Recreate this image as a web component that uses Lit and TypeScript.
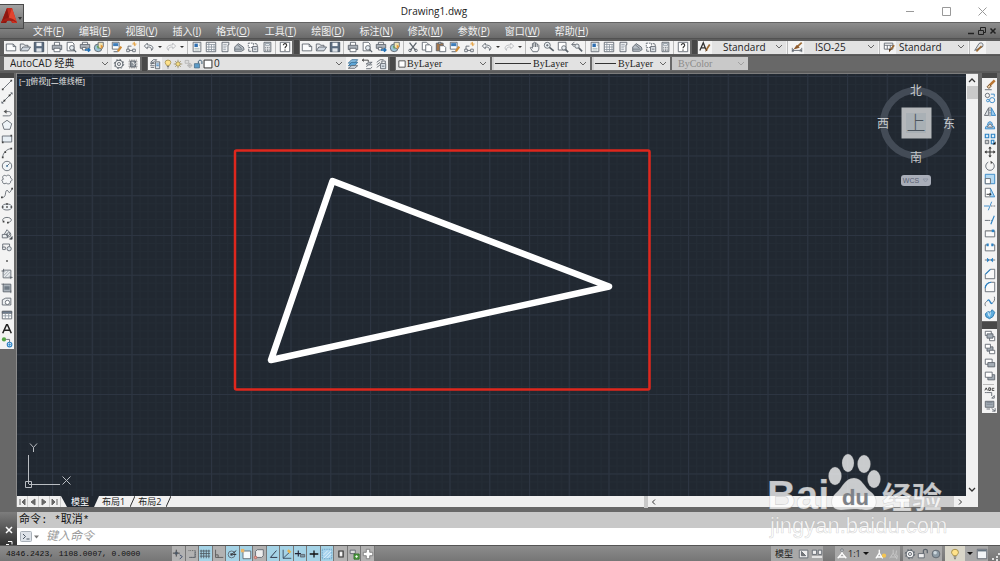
import { LitElement, html, svg, css } from "lit";
import { customElement } from "lit/decorators.js";
import { classMap } from "lit/directives/class-map.js";

const glyphs: Record<string, unknown> = {
  new: svg`<path d="M1.500 3.500h8l3 3v5h-11z" fill="#fbfcfd"/><path d="M9.500 3.500v3h3"/>`,
  open: svg`<path d="M1.500 11V3.500h4l1 1.500h4v2" fill="#e9ebee"/><path d="M1.500 11.500l3-4.500h9l-3 4.500z" fill="#cfd6de"/>`,
  save: svg`<path d="M1.500 1.500h11v11h-11z" fill="#5b6c80" stroke="#3d4a59"/><path d="M4 2h6v4H4z" fill="#f2f5f8" stroke="none"/><path d="M4 8.500h6v4H4z" fill="#dfe4e9" stroke="none"/>`,
  print: svg`<path d="M4 5V1.500h6V5" fill="#fff"/><path d="M1.500 5h11v5h-11z" fill="#aab0b7"/><path d="M3.500 8.500h7v4h-7z" fill="#fff"/>`,
  preview: svg`<path d="M2.500 1.500h6l2 2v8h-8z" fill="#fff"/><circle cx="8" cy="8" r="2.700" fill="#e7edf2"/><path d="M10 10l3 3" stroke-width="1.500"/>`,
  publish: svg`<path d="M4 4V1.500h6V4" fill="#fff"/><path d="M1.500 4h11v4.500h-11z" fill="#aab0b7"/><path d="M4 7.500h4v3H4z" fill="#fff"/><path d="M7 10.500h5M10.500 8.500l2 2-2 2" stroke="#1f6fb5" stroke-width="2"/>`,
  globe: svg`<circle cx="6" cy="8" r="4.500" fill="#9dc4d8"/><path d="M6 1.500h6v5l-2 3-4-2z" fill="#f3e6b4"/><path d="M4 5l3 2-1 3z" fill="#65a35a" stroke="none"/><path d="M9 4l3 2-3 4z" fill="#e69a3b" stroke="none"/>`,
  match: svg`<path d="M1.500 1.500h8v8h-8z" fill="#fff"/><path d="M2.500 2.500h6v3.500h-6z" fill="#3d7dbb" stroke="none"/><path d="M12 6.500L8 12" stroke="#d18b32" stroke-width="2.500"/><path d="M3 12.500h5" stroke="#4c535b"/>`,
  block: svg`<path d="M3.500 6v5h7M3.500 6h4"/><path d="M2 9.500h3v3H2zM9 9.500h3v3H9z" fill="#fff"/><path d="M11 1v5M8.500 3.500h5M9.200 1.700l3.600 3.600" stroke="#e5a140"/>`,
  undo: svg`<path d="M5 2.500L1.500 6 5 9V7c3.500-.3 5 .8 5 4 2-1.500 3.500-6-5-6.500z" fill="#f2f4f6"/>`,
  redo: svg`<g stroke="#b4b7ba"><path d="M9 2.500L12.500 6 9 9V7c-3.500-.3-5 .8-5 4-2-1.500-3.500-6 5-6.500z" fill="#f5f5f5"/></g>`,
  props: svg`<path d="M2.500 1.500h9v11h-9z" fill="#fff"/><path d="M4 3h4v4H4z" fill="#2f6fb0" stroke="none"/><path d="M4 8.500h6M4 10.500h6M9 3.500h1.500M9 5.500h1.500" stroke="#9aa"/>`,
  center: svg`<path d="M1.500 1.500h11v11h-11z" fill="#fff"/><path d="M1.500 4h11M4.500 1.500v11M1.500 7h11M1.500 10h11M7.500 4v8M10.500 4v8" stroke="#8a949f"/>`,
  palette: svg`<path d="M3.500 1.500h8v3h-1v8h-7z" fill="#eef0f2"/><path d="M5 4h4M5 6h4M5 8h3M5 10h3" stroke="#9aa3ac"/>`,
  sheet: svg`<path d="M2 7l4-4 6 4 1 3-3 2H2z" fill="#b9c0c7"/><path d="M2 9.500h9M5 4.500l5 4" stroke="#6b737b"/>`,
  markup: svg`<path d="M1.500 2.500h6v5h-6z" stroke-dasharray="2 1" fill="#fff"/><path d="M6.500 6.500h6v6h-6z" fill="#dfe4e8"/><path d="M9 3c3 0 3 1 3 3M2 9v3h3M8 9.500h3"/>`,
  calc: svg`<path d="M3.500 1.500h8v11h-8z" fill="#e6e8ea"/><path d="M5 3h5v2H5z" fill="#fff" stroke="#8a949f"/><path d="M5 7.500h5M5 9.500h5M5 11h5" stroke-dasharray="1 1"/>`,
  help: svg`<path d="M1.500 1.500h11v11h-11z" fill="#fff"/><path d="M5 5c0-2.500 4-2.500 4 0 0 1.500-2 1.500-2 3.500M7 10v1.500" stroke="#333" stroke-width="1.300"/>`,
  cut: svg`<path d="M3 2l7 9M11 2L4 11" stroke-width="1.500"/><circle cx="3.500" cy="11" r="1.500"/><circle cx="10.500" cy="11" r="1.500"/>`,
  copy: svg`<path d="M1.500 1.500h5l2 2v7h-7z" fill="#fff"/><path d="M5.500 4.500h5l2 2v6h-7z" fill="#fff"/>`,
  paste: svg`<path d="M1.500 2.500h8v9h-8z" fill="#a4754a"/><path d="M4 1.500h3v2H4z" fill="#ddd"/><path d="M5.500 5.500h5l2 2v5h-7z" fill="#fff"/>`,
  pan: svg`<path d="M4.500 12.500L1.500 8c0-1 1.500-1 2.500.5V3c1-1 1.700 0 1.700 0V1.800c1-.8 1.800 0 1.800 0V3c1-1 2 0 2 0v1.500c1-.8 2 0 2 1v4l-1.500 3z" fill="#f5f6f7"/><path d="M5.700 3v4M7.600 3v4M9.500 4v3"/>`,
  zoom: svg`<circle cx="5" cy="5" r="3.500" fill="#eef3f6"/><path d="M7.500 7.500l5 4" stroke-width="2"/><path d="M3.500 5h3M5 3.500v3"/>`,
  zoomwin: svg`<path d="M1.500 1.500h9v9h-9z" fill="#fff"/><circle cx="8" cy="8" r="2.500" fill="#e8edf1"/><path d="M10 10l3 3" stroke-width="2"/>`,
  zoomprev: svg`<path d="M4 1L1 4l3 3M1 4h4"/><circle cx="7" cy="6" r="2.500" fill="#e8edf1"/><path d="M9 8l4 4" stroke-width="2"/>`,
  textstyle: svg`<path d="M1 11L5 2l3 8M2.500 8h5" stroke="#333" stroke-width="1.500"/><path d="M12.500 4L8 11" stroke="#9c6b35" stroke-width="2"/><path d="M9 9l-2 3.500 3-1.500" fill="#6e4520" stroke="none"/>`,
  dimstyle: svg`<path d="M1.500 8v5M12.500 8v5M1.500 11h11M3.500 9.500L2 11l1.500 1.500M10.500 9.500L12 11l-1.500 1.500"/><path d="M12.500 2L8 6" stroke="#9c6b35" stroke-width="2"/><path d="M7 5l2.500 2.500L4 9z" fill="#8a5426" stroke="#8a5426"/>`,
  tablestyle: svg`<path d="M1.500 2.500h10v7h-10z" fill="#fff"/><path d="M1.500 5h10M5 5v4.500M8.500 5v4.500"/><path d="M13 5L9 10" stroke="#9c6b35" stroke-width="2"/><path d="M7 9l3 1-3 3z" fill="#5f3b1a" stroke="none"/>`,
  mlstyle: svg`<path d="M2 11L7 3c3-2 6 0 4 4z" fill="#e6e8ea"/><path d="M10 6L4 12" stroke="#9c6b35" stroke-width="2"/>`,
  gear: svg`<circle cx="7" cy="7" r="4.500" fill="#f2f2f2" stroke-width="1.200"/><circle cx="7" cy="7" r="5.500" stroke-dasharray="2 2.300"/><circle cx="7" cy="7" r="1.800"/>`,
  workspace: svg`<path d="M2.500 2.500h9v9h-9z" stroke-dasharray="1 1" stroke="#666"/><path d="M4 3.500h6v7H4z" fill="#8a9299"/><path d="M5.500 5h2v2M7 9l3-3" stroke="#eee"/>`,
  layers: svg`<path d="M2 5l3-3h4L6 5zM2 8l3-3M2 11h4" fill="#e8ebee"/><path d="M1.500 6.500h5M1.500 9h5"/><path d="M7.500 4.500h5v8h-5z" fill="#dce3e9"/><path d="M8.500 7h3M8.500 9h3" stroke="#3b7fbf"/>`,
  bulb: svg`<path d="M5 9c0-1.500-2-2-2-4a4 3.500 0 0 1 8 0c0 2-2 2.500-2 4z" fill="#ffe28a" stroke="#9b853f"/><path d="M5.500 10.500h3M6 12.500h2" stroke="#555"/>`,
  sun: svg`<path d="M7 1v12M1 7h12M3 3l8 8M11 3l-8 8" stroke="#92855a"/><circle cx="7" cy="7" r="3" fill="#f5dc82" stroke="#92855a"/>`,
  freeze: svg`<g stroke="#aaa"><path d="M3 2h5v4H3z" fill="#ddd"/><circle cx="9.500" cy="9" r="2.500"/><path d="M9.500 5.500v7M6 9h7"/></g>`,
  unlock: svg`<path d="M2 6.500h7v6H2z" fill="#5d9cc9" stroke="#3c6480"/><path d="M7.500 6V4c0-3 5-3 5 0v3" stroke="#3c5c74" stroke-width="1.400"/>`,
  swatch: svg`<path d="M1.500 1.500h11v11h-11z" fill="#fff" stroke="#333" stroke-width="1.400"/>`,
  layercur: svg`<path d="M1.500 6l4-4h7L9 6z" fill="#8fc3e6" stroke="#3a6f94"/><path d="M1.500 9l4-4h7L9 9z" fill="#5ca6d8" stroke="#3a6f94"/><path d="M1.500 12l4-3h7L9 12z" fill="#dbe3ea"/>`,
  layerprev: svg`<path d="M6 7l3-2h4l-3 2zM6 10l3-2h4M6 12.500h5l2-2" fill="#e8ebee"/><path d="M1.500 2.500h7v2M1.500 2.500l2-1.500M1.500 2.500l2 1.500" stroke="#333"/>`,
  layerstate: svg`<path d="M2 5l4-3h4M2 8l4-3M2 11l4-3"/><path d="M6.500 6.500h6v6h-6z" fill="#dce3e9"/><path d="M8 6V3.500h4V6M8 9.500h3"/>`,

  line: svg`<path d="M2 12L12 2"/><path d="M1 11h2v2H1zM11 1h2v2h-2z" fill="#444" stroke="none"/>`,
  xline: svg`<path d="M1 13L13 1"/><path d="M3 9h2v2H3zM9 3h2v2H9z" fill="#333" stroke="none"/><path d="M1 11v2h2M11 1h2v2"/>`,
  pline: svg`<path d="M2 11.500h7c4 0 4-5 0-5H5"/><path d="M6.500 4L3 6.500 6.500 9z" fill="#555" stroke="none"/>`,
  polygon: svg`<path d="M7 1.500l5.500 4-2 6.500h-7l-2-6.500z" fill="#eef3f7"/>`,
  rect: svg`<path d="M1.500 3.500h11v7h-11z" fill="#e7eef4"/><path d="M1 10h2v2H1zM11 2h2v2h-2z" fill="#444" stroke="none"/>`,
  arc: svg`<path d="M2 12C2 7 7 2 12 2"/><path d="M1 11h2v2H1zM4 5h2v2H4zM11 1h2v2h-2z" fill="#444" stroke="none"/>`,
  circle: svg`<circle cx="7" cy="7" r="5.500" fill="#f0f4f7"/><path d="M7 7l3-3"/><path d="M6 6h2v2H6z" fill="#3c6d96" stroke="none"/>`,
  cloud: svg`<path d="M3 6C0 3 4 0 6 2.500c2-2.500 6-.5 5 2 3 1 2 4 0 4 1 3-3 4-5 2-2 2-5 0-4-2C0 8 1 6 3 6z" fill="#f5f6f7"/>`,
  spline: svg`<path d="M1 12c6 1 3-8 6-8s1 7 6-2"/><path d="M0 11h2v2H0zM12 1h2v2h-2z" fill="#444" stroke="none"/>`,
  ellipse: svg`<ellipse cx="7" cy="7" rx="5.500" ry="3.500" fill="#eef2f5"/><path d="M6 6h2v2H6zM1 6h2v2H1zM11 6h2v2h-2zM6 2.500h2v2H6z" fill="#444" stroke="none"/>`,
  earc: svg`<path d="M3 9C0 6 4 4 7 4c6 0 7 5 1 6"/><path d="M7 9h2v2H7zM2 8h2v2H2z" fill="#444" stroke="none"/>`,
  insert: svg`<path d="M1.500 7.500h6v4h-6zM4 7l3-5 4 4-3 4" fill="#eceff1"/><circle cx="9" cy="8" r="2.500"/><path d="M13 10v3h-3z" fill="#222"/>`,
  mkblock: svg`<path d="M2 8.500V3.500h8v3M4 8.500H2" fill="none"/><circle cx="9.500" cy="9" r="2.500" fill="#dde3e8"/><path d="M2 7h3v3H2z" fill="#fff"/>`,
  point: svg`<path d="M6 6h2v2H6z" fill="#444" stroke="none"/>`,
  hatch: svg`<path d="M2.500 2.500h9v9h-9z" fill="#e8ebee"/><path d="M2.500 6l3.500-3.500M2.500 9.500l7-7M4 11.500L11.500 4M8 11.500l3.500-3.500" stroke="#9aa3ab"/><path d="M.5 3.500h3M3 1v3M10.500 11h3M11.500 10v3"/>`,
  gradient: svg`<path d="M2.500 2.500h9v9h-9z" fill="#a9b1b9"/><path d="M4 5h6v4H4z" fill="#6f7a85" stroke="none"/><path d="M.5 2.500h3M11.500 10v3"/>`,
  region: svg`<path d="M1.500 4.500l4-2h6v8h-10z" fill="#eceff1"/><circle cx="7.500" cy="7.500" r="2.500" fill="#fff"/>`,
  table: svg`<path d="M1.500 2.500h11v9h-11z" fill="#fff"/><path d="M1.500 3h11v2h-11z" fill="#74879a"/><path d="M1.500 8h11M5 5v6.500M9 5v6.500" stroke="#8c98a3"/>`,
  mtext: svg`<path d="M2 12L6.500 2h1L12 12M4 8.500h6" stroke="#222" stroke-width="1.800"/>`,
  addsel: svg`<circle cx="3.500" cy="4" r="2.500" fill="#55a545" stroke="none"/><path d="M6 4h4v3"/><circle cx="10" cy="10" r="2.700" fill="#e8f3fb" stroke="#2b82c4" stroke-width="1.300"/><path d="M8.500 10h3M10 8.500v3" stroke="#2b82c4"/>`,

  erase: svg`<path d="M12.500 1.500L6 8" stroke="#b97633" stroke-width="3"/><path d="M6.500 6.500l2 2-3 2.500-2-2z" fill="#e8c9a0" stroke="#6a4a2a"/><path d="M1 12.500h8"/>`,
  copyobj: svg`<circle cx="4" cy="4" r="2.500"/><circle cx="4.500" cy="10" r="1.500" stroke="#2b82c4"/><circle cx="9.500" cy="9.500" r="3" stroke="#2b82c4"/><path d="M8 2.500h4v3" stroke="#2b82c4"/>`,
  mirror: svg`<path d="M5.500 2v9h-5z" fill="#dfe3e6"/><path d="M8.500 2v9h5z" fill="#9ccbed" stroke="#2b82c4"/><path d="M7 1v12" stroke-dasharray="2 1"/>`,
  offset: svg`<path d="M1.500 11.500c0-4 3-3 3-6s5-3 5 0 3 2 3 6z" fill="#9ccbed" stroke="#2b82c4"/><path d="M4 9.500c0-2 2-1.500 2-3.500h2c0 2 2 1.500 2 3.500z" fill="#eee"/>`,
  array: svg`<path d="M1.500 8.500h4v4h-4z" fill="#ccc"/><path d="M1.500 1.500h4v4h-4zM8.500 1.500h4v4h-4zM8.500 8.500h3v4h-3z" stroke="#2b82c4" stroke-width="1.300" fill="#dceefa"/><path d="M13.500 10v3.500H10z" fill="#111" stroke="none"/>`,
  move: svg`<path d="M7 2v10M2 7h10" stroke="#333" stroke-width="1.200"/><path d="M7 .5L9 3H5zM7 13.500L9 11H5zM.5 7L3 5v4zM13.500 7L11 5v4z" fill="#333" stroke="none"/>`,
  rotate: svg`<path d="M5 2.500a5 5 0 1 0 4 0"/><path d="M7.500 1L10 2.500 8 5z" fill="#444" stroke="none"/>`,
  scale: svg`<path d="M1.500 1.500h11v11h-11z" fill="#b6daf2" stroke="#2b82c4"/><path d="M1.500 6.500h6v6h-6z" fill="#fff"/>`,
  stretch: svg`<path d="M1.500 1.500h6v10h-6z" fill="#fff"/><path d="M7.500 1.500l5 10h-5" fill="#a8d3f0" stroke="#2b82c4"/><path d="M3 8.500h5M6.500 7L8 8.500 6.500 10" stroke="#111"/>`,
  trim: svg`<path d="M8 7h6" stroke-dasharray="2 1"/><path d="M0 7h6" stroke="#2b82c4"/><path d="M9 2L5 12" stroke="#2b82c4"/>`,
  extend: svg`<path d="M1 7.500h4"/><path d="M5 7.500h4" stroke-dasharray="2 1"/><path d="M12 2L8 12" stroke="#2b82c4" stroke-width="1.300"/>`,
  breakpt: svg`<path d="M1.500 4.500h11v7h-11z" fill="#fafafa"/><path d="M1.500 4.500h8" stroke="#999"/><path d="M9 3h3v3H9z" fill="#2b82c4" stroke="none"/>`,
  brk: svg`<path d="M4 4.500H1.500v7h11v-7H10" fill="#fafafa"/><path d="M3 3h2.500v3H3zM8.500 3H11v3H8.500z" fill="#2b82c4" stroke="none"/>`,
  join: svg`<path d="M1 7h12"/><path d="M4 5L6 7 4 9zM10 5L8 7l2 2z" fill="#2b82c4" stroke="#2b82c4"/>`,
  chamfer: svg`<path d="M1.500 12.500v-5l6-6h5v11z" fill="#fafafa"/><path d="M1.500 7.500l6-6" stroke="#2b82c4" stroke-width="1.300"/>`,
  fillet: svg`<path d="M1.500 12.500v-4c0-4 3-7 7-7h4v11z" fill="#fafafa"/><path d="M1.500 8.500c0-4 3-7 7-7" stroke="#2b82c4" stroke-width="1.300"/>`,
  blend: svg`<path d="M2 13c-2-3 0-5 2-6M10 9c2-1 3-4 2-7"/><path d="M4 7c3-5 3 6 6 2" stroke="#2b82c4" stroke-width="1.500"/>`,
  explode: svg`<path d="M1.500 7l3-3 3 1 2-3 3 3-2 5-4 2.500-4-2z" fill="#5faee0" stroke="#2270a8"/><path d="M4.500 4l1 5M7.500 5l-1 5" stroke="#e8f4fc"/>`,
  front: svg`<path d="M1.500 1.500h7v5h-7zM6.500 7.500h6v5h-6z" fill="#fff"/><path d="M3.500 4.500h7v5h-7z" fill="#a3acb4"/>`,
  back: svg`<path d="M3.500 4.500h7v5h-7z" fill="#a3acb4"/><path d="M1.500 1.500h6v4.500h-6zM6.500 8.500h6v4h-6z" fill="#fff"/>`,
  above: svg`<path d="M1.500 2.500h8v6h-8z" fill="#fff"/><path d="M4.500 6.500h8v5h-8z" fill="#a3acb4"/>`,
  under: svg`<path d="M4.500 5.500h8v6h-8z" fill="#a3acb4"/><path d="M1.500 2.500h8v6h-8z" fill="#fff"/>`,
  textfront: svg`<path d="M1 4l1.500-3L4 4M5.500 1v3h2v-3zM12 1.500H9.500V4H12" stroke="#333"/><path d="M3 6.500h6v4M12 10v3H9z" /><path d="M1 6.500h2"/>`,
  hatchback: svg`<path d="M1.500 1.500h10v7h-10z" fill="#a3acb4"/><path d="M3 3h7M3 5h7" stroke="#7c8791"/><path d="M3 10.500h4M9 10l4 3M13 9.500v3.500H9.500"/>`,

  infer: svg`<path d="M5 2v8M1 6h8" stroke="#333"/><circle cx="5" cy="6" r="1.500" fill="#456"/><path d="M9 8l3 2-3 3" stroke="#346"/>`,
  snap: svg`<path d="M3 3h8v8H3" stroke-dasharray="1 1" stroke="#555"/><path d="M10.500 4v7H4"/>`,
  grid: svg`<path d="M2.500 2v10M5.500 2v10M8.500 2v10M11.500 2v10M1 3.500h12M1 6.500h12M1 9.500h12" stroke="#4f5961"/>`,
  ortho: svg`<path d="M3 2v9h9M3 8h3v3" stroke="#555"/>`,
  polar: svg`<circle cx="6.500" cy="7.500" r="4"/><path d="M6.500 7.500L12 3M6.500 7.500H12" stroke="#222"/><path d="M5.500 6.500h2v2h-2z" fill="#222"/>`,
  osnap: svg`<path d="M3.500 3.500h9v9h-9z" fill="#f5fafd"/><path d="M1 1h4v4H1z" fill="#e7b569" stroke="none"/>`,
  osnap3: svg`<path d="M3 4l2-2h7v7l-2 2H3z" fill="#eee"/><circle cx="3" cy="11" r="1.500" fill="#e9a591" stroke="#b66"/>`,
  otrack: svg`<path d="M11 3L4 11h8" stroke="#223"/>`,
  ducs: svg`<path d="M2.500 2v10H12M2.500 12L10 5" stroke="#345"/><path d="M9 1.500l3 3-2 2-3-3z" fill="#e7b24a" stroke="none"/>`,
  dyn: svg`<path d="M5 3v7M1 6.500h7" stroke="#223" stroke-width="1.300"/><path d="M7.500 7.500h5v3h-5z" fill="#7f98a5"/>`,
  lwt: svg`<path d="M7 3v8M2 7h10" stroke="#111" stroke-width="1.500"/>`,
  tpy: svg`<path d="M1.500 1.500h11v11h-11z" fill="#a7d3ee" stroke="#5b94b8" stroke-dasharray="1 1"/><path d="M3 12l9-9M3 8l5-5M7 12l5-5" stroke="#e6f4fb"/>`,
  quick: svg`<path d="M4.500 3.500h5v7h-5z" fill="#ccc" stroke="#333" stroke-width="1.300"/><path d="M6 5h2v4H6z" fill="#fff" stroke="none"/>`,
  cycle: svg`<path d="M2.500 2.500h6v4h-6z" fill="#ddd"/><path d="M7 7h6v6H7z" fill="#50a043" stroke="#2e6d25"/><path d="M8.500 10h3M10 8.500v3" stroke="#fff"/>`,
  plus: svg`<path d="M5 1.500h4V5h3.500v4H9v3.500H5V9H1.500V5H5z" fill="#fff" stroke="#777"/>`,
  layoutq: svg`<path d="M1.500 2.500h10v9h-10z" fill="#eee"/><path d="M4 4v5h5z" fill="#777"/>`,
  viewsq: svg`<path d="M1.500 2.500h5v5h-5zM8.500 2.500h4v5h-4z" fill="#eee"/><path d="M1 10.500h12" stroke-width="2" stroke="#eee"/>`,
  scaleA: svg`<path d="M7 2v4L2 12M7 6l5 6M3.500 10.500h7" stroke="#fff" stroke-width="1.500"/><circle cx="7" cy="2.500" r="1.500" fill="#eee"/>`,
  scaleSun: svg`<path d="M5 2v4L1 12M5 6l4 6M2.500 10.500h6" stroke="#fff" stroke-width="1.500"/><circle cx="10.500" cy="9" r="2.500" fill="#f4c552" stroke="none"/>`,
  scaleOff: svg`<g stroke="#ccc"><path d="M6 2v4L2 12M6 6l4 6M3.500 10.500h6M10 3l-1 5 2 1-1 4" /></g>`,
  hw: svg`<path d="M1.500 6.500h7v5h-7z" fill="#eee"/><path d="M7.500 6V3c0-2 4.500-2 4.500 0v3" stroke-width="1.500"/>`,
  isolate: svg`<circle cx="7" cy="7" r="4.500" fill="#8d9ba5"/><circle cx="6" cy="5.500" r="2" fill="#cdd7dd" stroke="none"/>`,
  clean: svg`<path d="M1.500 1.500h11v11h-11z" fill="#f2f4f6"/><path d="M2 2h10v2H2z" fill="#65737f" stroke="none"/>`,
};

const icon = (name: string) => html`<svg class="ic" viewBox="0 0 14 14" fill="none" stroke="#5c646c" aria-hidden="true">${glyphs[name]}</svg>`;
const chevron = html`<svg class="chev" viewBox="0 0 8 6" fill="none" stroke="#666" aria-hidden="true"><path d="M1 1l3 3 3-3"/></svg>`;

type Tool = [string, string];
const SEP: Tool = ["|", ""];
const DROP: Tool = ["v", "更多"];

const fileTools: Tool[] = [["new", "新建"], ["open", "打开"], ["save", "保存"], SEP, ["print", "打印"], ["preview", "打印预览"], ["publish", "发布"], ["globe", "三维打印"], SEP];
const undoTools: Tool[] = [["undo", "放弃"], DROP, ["redo", "重做"], DROP, SEP];
const paletteTools: Tool[] = [["props", "特性"], ["center", "设计中心"], ["palette", "工具选项板"], ["sheet", "图纸集"], ["markup", "标记集"], ["calc", "计算器"], SEP, ["help", "帮助"]];
const quickBar: Tool[] = [...fileTools, ["match", "特性匹配"], ["block", "块编辑器"], SEP, ...undoTools, ...paletteTools];
const standardBar: Tool[] = [
  ...fileTools, ["cut", "剪切"], ["copy", "复制"], ["paste", "粘贴"], ["match", "特性匹配"], ["block", "块编辑器"], SEP,
  ...undoTools, ["pan", "平移"], ["zoom", "实时缩放"], ["zoomwin", "窗口缩放"], ["zoomprev", "上一个缩放"], SEP, ...paletteTools,
];
const drawBar: Tool[] = [
  ["line", "直线"], ["xline", "构造线"], ["pline", "多段线"], ["polygon", "多边形"], ["rect", "矩形"], ["arc", "圆弧"], ["circle", "圆"],
  ["cloud", "修订云线"], ["spline", "样条曲线"], ["ellipse", "椭圆"], ["earc", "椭圆弧"], ["insert", "插入块"], ["mkblock", "创建块"], ["point", "点"],
  ["hatch", "图案填充"], ["gradient", "渐变色"], ["region", "面域"], ["table", "表格"], ["mtext", "多行文字"], ["addsel", "添加选定对象"],
];
const modifyBar: Tool[] = [
  ["erase", "删除"], ["copyobj", "复制"], ["mirror", "镜像"], ["offset", "偏移"], ["array", "阵列"], ["move", "移动"], ["rotate", "旋转"],
  ["scale", "缩放"], ["stretch", "拉伸"], ["trim", "修剪"], ["extend", "延伸"], ["breakpt", "打断于点"], ["brk", "打断"], ["join", "合并"],
  ["chamfer", "倒角"], ["fillet", "圆角"], ["blend", "光顺曲线"], ["explode", "分解"],
];
const orderBar: Tool[] = [["front", "前置"], ["back", "后置"], ["above", "置于对象之上"], ["under", "置于对象之下"], SEP, ["textfront", "文字前置"], ["hatchback", "图案填充后置"]];
const modes: [string, string, boolean][] = [
  ["infer", "推断约束", false], ["snap", "捕捉", false], ["grid", "栅格", true], ["ortho", "正交", false], ["polar", "极轴", true],
  ["osnap", "对象捕捉", true], ["osnap3", "三维对象捕捉", false], ["otrack", "对象追踪", true], ["ducs", "动态 UCS", true], ["dyn", "动态输入", true],
  ["lwt", "线宽", true], ["tpy", "透明度", true], ["quick", "快捷特性", false], ["cycle", "选择循环", false], ["plus", "注释监视器", false],
];
const menus: [string, string][] = [
  ["文件", "F"], ["编辑", "E"], ["视图", "V"], ["插入", "I"], ["格式", "O"], ["工具", "T"],
  ["绘图", "D"], ["标注", "N"], ["修改", "M"], ["参数", "P"], ["窗口", "W"], ["帮助", "H"],
];

@customElement("app-root")
export class AppRoot extends LitElement {
  static styles = css`
    :host { display: flex; flex-direction: column; min-height: 100vh; background: #686868; color: #222; font: 10px/14px "Open Sans", "Noto Sans CJK SC", sans-serif; }
    * { box-sizing: border-box; }
    button, select, input { font: inherit; color: inherit; margin: 0; padding: 0; border: 0; background: none; border-radius: 0; }
    button { display: grid; place-items: center; }
    select { appearance: none; }
    svg { display: block; }
    .title { display: grid; grid-template-columns: 1fr auto 1fr; align-items: center; height: 22px; background: #fff; }
    .title h1 { margin: 0; font: 10px/16px "Open Sans", sans-serif; grid-column: 2; padding-right: 132px; }
    .win { display: flex; justify-content: flex-end; }
    .win button { width: 36px; height: 20px; }
    .app { position: absolute; left: 0; top: 4px; width: 24px; height: 25px; background: linear-gradient(#a2a2a2, #6f6f6f); border: 1px solid #4a4a4a; border-left: 0; z-index: 1; }
    .menu { display: flex; align-items: center; gap: 15px; height: 16px; padding-left: 33px; background: linear-gradient(#8d8d8d, #6a6a6a); border-top: 1px solid #636363; color: #f1f1f1; }
    .menu button { white-space: nowrap; display: block; line-height: 14px; }
    .menu .mdi { margin-left: auto; display: flex; gap: 3px; padding-right: 3px; }
    .mdi button { width: 8px; height: 10px; }
    .bars { display: flex; align-items: center; background: #5d5d5d; }
    .first { height: 17px; padding-left: 4px; border-top: 1px solid #525252; }
    .second { height: 18px; padding-left: 4px; background: #686868; border-top: 1px solid #555; border-bottom: 2px solid #5c5c5c; }
    .panel { display: flex; height: 13px; background: #f3f3f3; flex: none; }
    .panel.fill { flex: 1; }
    .panel button { width: 14px; height: 13px; }
    .panel .drop { width: 8px; }
    .panel .drop::after { content: ""; border: 2px solid transparent; border-top-color: #333; margin-top: 2px; }
    .ic { width: 12px; height: 12px; }
    .sep { width: 4px; flex: none; background: linear-gradient(90deg, transparent 1px, #bbb 1px 2px, transparent 2px); }
    .grip { width: 8px; height: 14px; flex: none; background: #484848; border-left: 2px solid #686868; border-right: 1px solid #686868; }
    .pick { display: grid; align-items: center; flex: none; height: 13px; background: #e2e2e2; }
    .pick > * { grid-area: 1 / 1; }
    .pick select { width: 100%; height: 13px; line-height: 13px; padding-left: 6px; color: #222; opacity: 1; }
    .pick.ml { flex: 1; }
    .chev { width: 8px; height: 6px; justify-self: end; margin-right: 3px; pointer-events: none; }
    .lead { display: flex; padding-left: 1px; pointer-events: none; }
    .lead .ic { width: 10px; height: 10px; }
    .serif select { font-family: "Liberation Serif", serif; }
    .std { width: 74px; } .std select { padding-left: 11px; }
    .narrow { width: 72px; } .narrow select { padding-left: 3px; }
    .ws { width: 108px; }
    .layer { width: 184px; } .layer select { padding-left: 52px; }
    .color { width: 94px; margin-right: 2px; } .color select { padding-left: 11px; }
    .color .ic { width: 8px; height: 8px; margin-left: 1px; }
    .ltype { width: 98px; border-left: 2px solid #cfcfcf; margin-right: 2px; } .ltype select { padding-left: 39px; }
    .lweight { width: 78px; border-left: 2px solid #cfcfcf; margin-right: 2px; } .lweight select { padding-left: 24px; }
    .rule { width: 36px; height: 1px; background: #333; margin-left: 1px; }
    .lweight .rule { width: 21px; }
    .pcolor { width: 76px; background: #c9c9c9; } .pcolor select { padding-left: 6px; color: #8b8b8b; }
    .pcolor .chev { opacity: .4; }
    .main { display: grid; grid-template-columns: 17px minmax(0, 1fr) 12px 22px; grid-template-rows: minmax(0, 1fr) 11px; flex: 1; }
    .side { background: #686868; grid-row: 1 / 3; }
    .right { padding: 0 3px 0 4px; grid-column: 4; }
    .left { border-right: 1px solid #8a8a8a; padding-right: 2px; }
    .vgrip { height: 5px; background: #484848; }
    .right .mid { height: 8px; border-top: 1px solid #686868; }
    .vbar { display: grid; grid-auto-rows: minmax(0, 1fr); background: #f3f3f3; }
    .vbar button { width: 100%; }
    .draw { height: 271px; }
    .modify { height: 243px; }
    .order { height: 84px; grid-template-rows: repeat(4, minmax(0, 1fr)) 3px; }
    .order .sep { width: 11px; height: 1px; margin: 1px; background: #bbb; }
    .canvas { position: relative; background: #212831; border-top: 1px solid #7c7c7c; overflow: hidden; }
    .sheet { position: absolute; inset: 0; width: 100%; height: 100%; }
    .vp { position: absolute; left: 2px; top: 2px; color: #e2e2e2; font: 8px/12px "Liberation Sans", "Noto Sans CJK SC", sans-serif; display: flex; }
    .ucs { position: absolute; left: 5px; bottom: 2px; }
    .cube { position: absolute; right: 10px; top: 4px; font-family: "Noto Sans CJK SC", sans-serif; }
    .vscroll { display: flex; flex-direction: column; align-items: center; justify-content: space-between; background: #f0f0f0; border-top: 1px solid #7c7c7c; }
    .vscroll button, .foot .hs button { width: 12px; height: 12px; }
    .thumb { width: 11px; height: 13px; background: #c9c9c9; margin-bottom: auto; }
    .foot { grid-column: 2 / 4; display: flex; align-items: center; height: 11px; background: #f0f0f0; }
    .nav { display: flex; }
    .nav button { width: 11px; height: 11px; border-right: 1px solid #ccc; }
    .tab { height: 11px; line-height: 11px; padding: 0 6px; margin-right: -1px; white-space: nowrap; font-size: 9px; display: flex; gap: 5px; align-items: center; }
    .tab svg { width: 5px; height: 11px; flex: none; }
    .tab.on { background: #212831; color: #fff; clip-path: polygon(0 0, 100% 0, calc(100% - 5px) 100%, 6px 100%); padding: 0 10px; }
    .tab.off { padding: 0 0 0 4px; }
    .hs { flex: 0 0 334px; margin-left: auto; display: flex; align-items: center; border-left: 4px solid #c9c9c9; padding-right: 12px; }
    .hs .track { flex: 1; height: 11px; display: flex; justify-content: flex-end; }
    .hs .bar { width: 45px; background: #cdcdcd; }
    .cmd { display: grid; grid-template-columns: 17px 1fr; margin-top: 5px; height: 33px; font: 12px/16px "Liberation Mono", "Noto Sans CJK SC", monospace; }
    .cmdside { background: linear-gradient(#7d7d7d, #333); display: flex; flex-direction: column; align-items: center; justify-content: space-between; grid-row: 1 / 3; }
    .cmdside button { width: 14px; height: 14px; }
    .dots { width: 13px; height: 5px; margin-top: 2px; background: radial-gradient(#aaa 40%, transparent 50%) 0 0 / 2px 2px; }
    .hist { margin: 0; height: 16px; background: #c8c8c8; padding-left: 2px; font-size: 11px; color: #111; }
    .entry { display: flex; align-items: center; height: 17px; background: #fff; padding-left: 3px; }
    .entry input { flex: 1; outline: none; font-style: italic; padding-left: 6px; height: 16px; }
    .entry input::placeholder { color: #999; opacity: 1; }
    .status { display: flex; align-items: center; height: 16px; background: linear-gradient(#8c8c8c, #767676); border-top: 1px solid #555; }
    .coord { width: 172px; padding-left: 6px; font: 8px/14px "Liberation Mono", monospace; color: #111; }
    .modes { display: grid; grid-template-columns: repeat(15, minmax(0, 1fr)); width: 203px; height: 15px; }
    .modes button { background: #b2b2b2; border-right: 1px solid #777; }
    .modes button.on { background: #a5d3e6; }
    .right-s { margin-left: auto; display: flex; height: 15px; }
    .grp { display: flex; background: #a8a8a8; margin-left: 12px; }
    .grp.tight { margin-left: 3px; }
    .grp button { width: 13px; height: 15px; }
    .grp button.txt { width: 26px; white-space: nowrap; font-size: 9px; line-height: 15px; }
    .grp button.num { width: 26px; display: flex; align-items: center; gap: 2px; font-size: 9px; }
    .tri { border: 3px solid transparent; border-top-color: #111; border-bottom: 0; }
    .grp button.lamp { width: 20px; background: #d9d6c9; }
    .grp button.more { width: 10px; }
    .size { width: 12px; height: 15px; }
    .mark { position: absolute; right: 52px; bottom: 22px; pointer-events: none; }
  `;

  private tools(list: Tool[]) {
    return list.map(([name, label]) =>
      name === "|" ? html`<span class="sep"></span>`
        : name === "v" ? html`<button class="drop" aria-label=${label}></button>`
          : html`<button title=${label} aria-label=${label}>${icon(name)}</button>`);
  }

  private pick(cls: string, label: string, value: string, lead: unknown = null, disabled = false) {
    return html`<label class="pick ${cls}">
      <select aria-label=${label} ?disabled=${disabled}><option>${value}</option></select>
      ${lead}${chevron}
    </label>`;
  }

  private header() {
    return html`
      <header class="title">
        <h1>Drawing1.dwg</h1>
        <div class="win">
          <button aria-label="最小化"><svg width="9" height="9" stroke="#999"><path d="M0 4.500h8"/></svg></button>
          <button aria-label="最大化"><svg width="9" height="9" stroke="#999" fill="none"><path d="M.5.5h8v8h-8z"/></svg></button>
          <button aria-label="关闭"><svg width="9" height="9" stroke="#999"><path d="M.5.5l8 8M8.500.5l-8 8"/></svg></button>
        </div>
      </header>
      <button class="app" aria-label="应用程序菜单">
        <svg width="24" height="22" viewBox="0 0 24 22">
          <path d="M7 2h5l5 15h-5l-3-6-3 6H1z" fill="#c22a1c"/><path d="M7 2L1 17h5l3-6z" fill="#8e1710"/>
          <path d="M12 2l5 15-4-1-4-5z" fill="#e2452f"/><path d="M2 15c4-4 9-4 14 0l1 2c-5-3-11-3-16 0z" fill="#a51d14"/>
          <path d="M18 11h4l-2 3z" fill="#333"/>
        </svg>
      </button>
      <nav class="menu">
        ${menus.map(([t, k]) => html`<button>${t}(<u>${k}</u>)</button>`)}
        <div class="mdi">
          <button aria-label="最小化图形"><svg width="8" height="8" stroke="#222"><path d="M1 6.500h6" stroke-width="1.500"/></svg></button>
          <button aria-label="还原图形"><svg width="8" height="8" stroke="#222" fill="none"><path d="M.5 3.500h5v4h-5zM2.500 3V.5h5v5H6"/></svg></button>
          <button aria-label="关闭图形"><svg width="8" height="8" stroke="#222" stroke-width="1.500"><path d="M1.500 1.500l5 5M6.500 1.500l-5 5"/></svg></button>
        </div>
      </nav>
      <div class="bars first">
        <div class="panel">${this.tools(quickBar)}</div><span class="grip"></span>
        <div class="panel">${this.tools(standardBar)}</div><span class="grip"></span>
        <div class="panel fill">
          ${this.tools([["textstyle", "文字样式"]])}${this.pick("std", "文字样式", "Standard")}
          <span class="sep"></span>${this.tools([["dimstyle", "标注样式"]])}${this.pick("std", "标注样式", "ISO-25")}
          <span class="sep"></span>${this.tools([["tablestyle", "表格样式"]])}${this.pick("narrow", "表格样式", "Standard")}
          <span class="sep"></span>${this.tools([["mlstyle", "多重引线样式"]])}<span class="pick ml"></span>
        </div>
      </div>
      <div class="bars second">
        <div class="panel">${this.pick("ws", "工作空间", "AutoCAD 经典")}${this.tools([["gear", "工作空间设置"], ["workspace", "我的工作空间"]])}</div>
        <span class="grip"></span>
        <div class="panel">
          ${this.tools([["layers", "图层特性管理器"]])}
          ${this.pick("layer", "图层", "0", html`<span class="lead">${["bulb", "sun", "freeze", "unlock", "swatch"].map(icon)}</span>`)}
          ${this.tools([["layercur", "置为当前"], ["layerprev", "上一个图层"], ["layerstate", "图层状态"]])}
        </div>
        <span class="grip"></span>
        ${this.pick("color serif", "颜色", "ByLayer", html`<span class="lead">${icon("swatch")}</span>`)}
        ${this.pick("ltype serif", "线型", "ByLayer", html`<span class="rule"></span>`)}
        ${this.pick("lweight serif", "线宽", "ByLayer", html`<span class="rule"></span>`)}
        ${this.pick("pcolor serif", "打印样式", "ByColor", null, true)}
      </div>`;
  }

  private drawing() {
    return html`<section class="canvas" aria-label="绘图区">
      <svg class="sheet">
        <defs>
          <pattern id="minor" width="7.950" height="7.950" x="35" y="2" patternUnits="userSpaceOnUse"><path d="M0 .5h8M.5 0v8" stroke="#242c35" fill="none"/></pattern>
          <pattern id="major" width="39.750" height="39.750" x="35" y="2" patternUnits="userSpaceOnUse"><path d="M0 .5h40M.5 0v40" stroke="#2d3542" fill="none"/></pattern>
        </defs>
        <rect width="100%" height="100%" fill="url(#minor)"/><rect width="100%" height="100%" fill="url(#major)"/>
        <rect x="218" y="76.500" width="414.500" height="239" rx="1.500" fill="none" stroke="#df271d" stroke-width="2.500"/>
        <path d="M315.500 107L592 212.500 254 286z" fill="none" stroke="#fff" stroke-width="6.500" stroke-linejoin="round"/>
      </svg>
      <div class="vp"><span>[−]</span><span>[俯视]</span><span>[二维线框]</span></div>
      <svg class="ucs" width="60" height="52" fill="none" stroke="#b9bdc2">
        <path d="M6.500 42V13M7 42.500h31M3.500 39.500h6v6h-6zM8 1.500l3.500 4 3.500-4M11.500 5.500V10M40.500 34.500l8 8M48.500 34.500l-8 8"/>
      </svg>
      <svg class="cube" width="80" height="110" font-size="12" text-anchor="middle" fill="#c5c8cc">
        <circle cx="40" cy="45" r="32.500" fill="none" stroke="#434b56" stroke-width="7"/>
        <path d="M25.500 29.500h30v31h-30z" fill="#b5b8bb"/><path d="M30 35h20v20H30z" fill="#a9b0b5"/>
        <text x="40" y="52" font-size="19" font-weight="300" fill="#4d565f">上</text>
        <text x="40" y="17">北</text><text x="40" y="84">南</text><text x="7" y="50">西</text><text x="73" y="50">东</text>
        <rect x="25" y="97" width="30" height="11" rx="3" fill="#a9aeb9"/>
        <text x="35" y="105" font-size="7" fill="#5a6273" font-family="Liberation Sans">WCS</text>
        <path d="M47 101h5l-2.500 3z" fill="none" stroke="#8f97a5"/>
      </svg>
    </section>`;
  }

  private slash() {
    return html`<svg viewBox="0 0 5 11" stroke="#333" aria-hidden="true"><path d="M0 11L5 0"/></svg>`;
  }

  render() {
    const nav = ["M3 2v6M8 2L5 5l3 3z", "M7 2L3 5l4 3z", "M3 2l4 3-4 3z", "M2 2l3 3-3 3zM7 2v6"];
    return html`
      ${this.header()}
      <main class="main">
        <aside class="side left"><div class="vgrip"></div><div class="vbar draw">${this.tools(drawBar)}</div></aside>
        ${this.drawing()}
        <div class="vscroll">
          <button aria-label="向上滚动"><svg width="8" height="6" stroke="#333" fill="none" stroke-width="1.300"><path d="M1 5l3-3 3 3"/></svg></button>
          <span class="thumb"></span>
          <button aria-label="向下滚动"><svg width="8" height="6" stroke="#333" fill="none" stroke-width="1.300"><path d="M1 1l3 3 3-3"/></svg></button>
        </div>
        <aside class="side right">
          <div class="vgrip"></div><div class="vbar modify">${this.tools(modifyBar)}</div>
          <div class="vgrip mid"></div><div class="vbar order">${this.tools(orderBar)}</div>
        </aside>
        <div class="foot">
          <div class="nav">${nav.map((d) => html`<button aria-label="切换布局"><svg width="10" height="10" fill="#666" stroke="#666"><path d=${d}/></svg></button>`)}</div>
          <button class="tab on">模型</button>
          <button class="tab off">布局1${this.slash()}</button>
          <button class="tab off">布局2${this.slash()}</button>
          <div class="hs">
            <button aria-label="向左滚动"><svg width="6" height="8" stroke="#333" fill="none"><path d="M4 1.500L1.500 4 4 6.500"/></svg></button>
            <div class="track"><span class="bar"></span></div>
            <button aria-label="向右滚动"><svg width="6" height="8" stroke="#333" fill="none"><path d="M2 1.500L4.500 4 2 6.500"/></svg></button>
          </div>
        </div>
      </main>
      <section class="cmd">
        <div class="cmdside">
          <span class="dots"></span>
          <button aria-label="关闭命令行"><svg width="8" height="8" stroke="#fff" stroke-width="1.500"><path d="M1 1l6 6M7 1L1 7"/></svg></button>
          <svg width="8" height="5" stroke="#fff" fill="none"><path d="M1 4.500h3M3 1.500h4v3"/></svg>
        </div>
        <p class="hist">命令: *取消*</p>
        <label class="entry">
          <svg width="20" height="12" fill="none"><rect x=".5" y=".5" width="11" height="10" rx="1" fill="#dde2e8" stroke="#a9b0b8"/><path d="M3 3l2.500 2.500L3 8M6.500 8h3" stroke="#4a5663"/><path d="M14 4.500h5l-2.500 3z" fill="#777"/></svg>
          <input aria-label="命令" placeholder="键入命令">
        </label>
      </section>
      <footer class="status">
        <span class="coord">4846.2423, 1108.0007, 0.0000</span>
        <div class="modes">${modes.map(([n, l, on]) => html`<button class=${classMap({ on })} aria-label=${l} aria-pressed=${on ? "true" : "false"}>${icon(n)}</button>`)}</div>
        <div class="right-s">
          <div class="grp"><button class="txt">模型</button>${this.tools([["layoutq", "快速查看布局"], ["viewsq", "快速查看图形"]])}</div>
          <div class="grp">${this.tools([["scaleA", "注释比例"]])}<button class="num">1:1<span class="tri"></span></button>${this.tools([["scaleSun", "注释可见性"], ["scaleOff", "自动添加比例"]])}</div>
          <div class="grp tight">${this.tools([["gear", "切换工作空间"], ["hw", "锁定"], ["isolate", "硬件加速"]])}</div>
          <div class="grp tight"><button class="lamp" aria-label="隔离对象">${icon("bulb")}</button><button class="more" aria-label="状态栏菜单"><span class="tri"></span></button>${this.tools([["clean", "全屏显示"]])}</div>
          <svg class="size" viewBox="0 0 12 15" fill="#ddd"><path d="M8 10h2v2H8zM4 12h2v2H4zM8 13h2v2H8zM10 7h2v2h-2z"/></svg>
        </div>
      </footer>
      <svg class="mark" width="182" height="88" fill="#fff" fill-opacity=".76" stroke="#888" stroke-opacity=".3" stroke-width=".7">
        <g font-family="Liberation Sans, Noto Sans CJK SC, sans-serif" font-weight="bold">
          <text x="1" y="58" font-size="40">Bai</text>
          <ellipse cx="69" cy="25" rx="6.500" ry="9"/><ellipse cx="82" cy="12" rx="6" ry="9"/><ellipse cx="98" cy="13" rx="6.500" ry="9"/><ellipse cx="108" cy="28" rx="6.500" ry="9"/>
          <path d="M88 27c8 0 10 9 17 14s8 18-4 18c-6 0-8-1-13-1s-8 1-13 1c-11 0-12-11-5-17s9-15 18-15z"/>
          <text x="76" y="54" font-size="22" fill="#7d8187" fill-opacity="1">du</text>
          <text x="116" y="57" font-size="30">经验</text>
        </g>
        <text x="4" y="82" font-family="Liberation Sans, sans-serif" font-size="22" fill-opacity=".85">jingyan.baidu.com</text>
      </svg>`;
  }
}
